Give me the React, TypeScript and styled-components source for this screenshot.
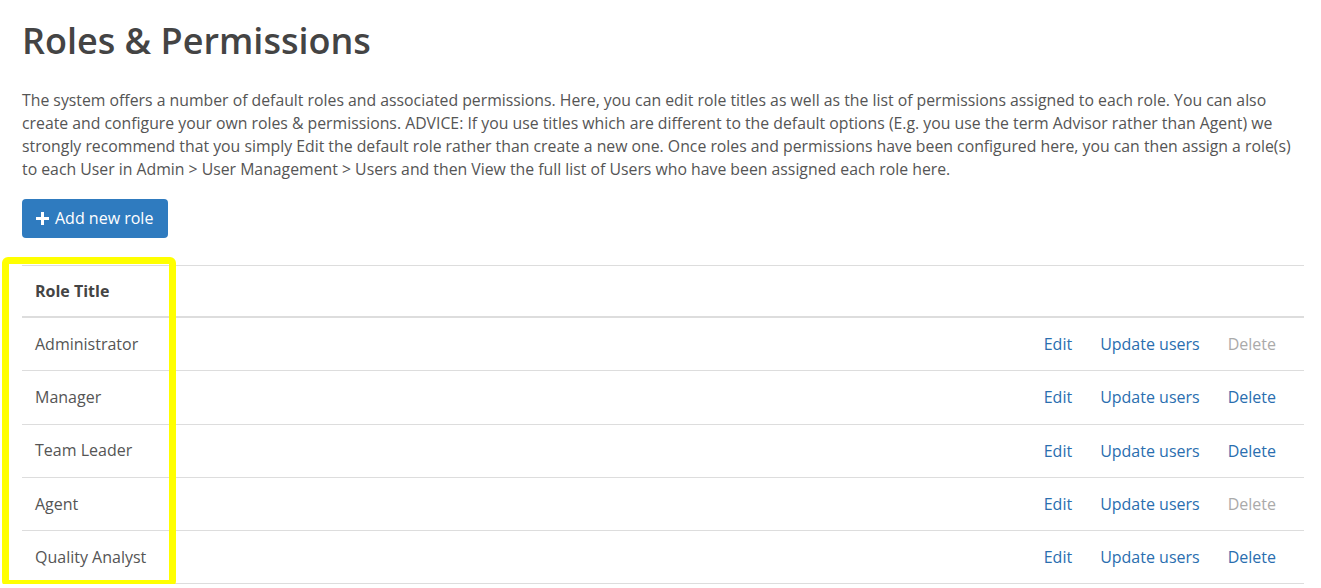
import React from "react";
import styled, { createGlobalStyle } from "styled-components";

const Global = createGlobalStyle`
  html, body { margin: 0; padding: 0; background: #fff; }
  body { font-family: "Open Sans", "Liberation Sans", sans-serif; color: #555; }
  * { box-sizing: border-box; }
`;

const Page = styled.div`
  padding: 16px 17px 0 22px;
  position: relative;
`;

const Title = styled.h1`
  margin: 0;
  font-size: 36px;
  font-weight: 600;
  color: #444;
  line-height: 50px;
`;

const Intro = styled.p`
  margin: 23px 0 0;
  font-size: 15.8px;
  line-height: 23px;
  color: #555;
`;

const AddButton = styled.button`
  margin-top: 18px;
  height: 39px;
  padding: 0 15px 1px 14px;
  background: #2f7bbf;
  color: #fff;
  border: none;
  border-radius: 4px;
  font-family: inherit;
  font-size: 16px;
  display: inline-flex;
  align-items: center;
  gap: 6px;
`;

const Table = styled.div`
  margin-top: 27px;
  border-top: 1px solid #ddd;
`;

const Row = styled.div<{ $head?: boolean }>`
  display: flex;
  align-items: center;
  height: ${(p) => (p.$head ? 52 : 53.3)}px;
  padding: 0 28px 0 13px;
  border-bottom: ${(p) => (p.$head ? "2px" : "1px")} solid #ddd;
  font-size: 16px;
  font-weight: ${(p) => (p.$head ? 700 : 400)};
  color: ${(p) => (p.$head ? "#444" : "#555")};
`;

const Name = styled.div`
  flex: 1;
  padding-bottom: 1px;
`;

const Actions = styled.div`
  display: flex;
  gap: 28px;
`;

const Action = styled.a<{ $disabled?: boolean }>`
  color: ${(p) => (p.$disabled ? "#aaa" : "#2a6eaf")};
  text-decoration: none;
  font-size: 16px;
`;

const Highlight = styled.div`
  position: absolute;
  left: 2px;
  top: 257px;
  width: 174px;
  height: 330px;
  border: 7px solid #ffff00;
  border-radius: 6px;
  pointer-events: none;
`;

const roles = [
  { name: "Administrator", canDelete: false },
  { name: "Manager", canDelete: true },
  { name: "Team Leader", canDelete: true },
  { name: "Agent", canDelete: false },
  { name: "Quality Analyst", canDelete: true },
];

const Plus = () => (
  <svg width="13" height="13" viewBox="0 0 13 13">
    <path d="M5 0h3v5h5v3H8v5H5V8H0V5h5z" fill="#fff" />
  </svg>
);

export default function App() {
  return (
    <>
      <Global />
      <Page>
        <Title>Roles &amp; Permissions</Title>
        <Intro>
          The system offers a number of default roles and associated permissions. Here, you can edit role titles as well as the list of permissions assigned to each role. You can also create and configure your own roles &amp; permissions. ADVICE: If you use titles which are different to the default options (E.g. you use the term Advisor rather than Agent) we strongly recommend that you simply Edit the default role rather than create a new one. Once roles and permissions have been configured here, you can then assign a role(s) to each User in Admin &gt; User Management &gt; Users and then View the full list of Users who have been assigned each role here.
        </Intro>
        <AddButton>
          <Plus />
          Add new role
        </AddButton>
        <Table>
          <Row $head>
            <Name>Role Title</Name>
          </Row>
          {roles.map((r) => (
            <Row key={r.name}>
              <Name>{r.name}</Name>
              <Actions>
                <Action href="#">Edit</Action>
                <Action href="#">Update users</Action>
                <Action href="#" $disabled={!r.canDelete}>Delete</Action>
              </Actions>
            </Row>
          ))}
        </Table>
        <Highlight />
      </Page>
    </>
  );
}
